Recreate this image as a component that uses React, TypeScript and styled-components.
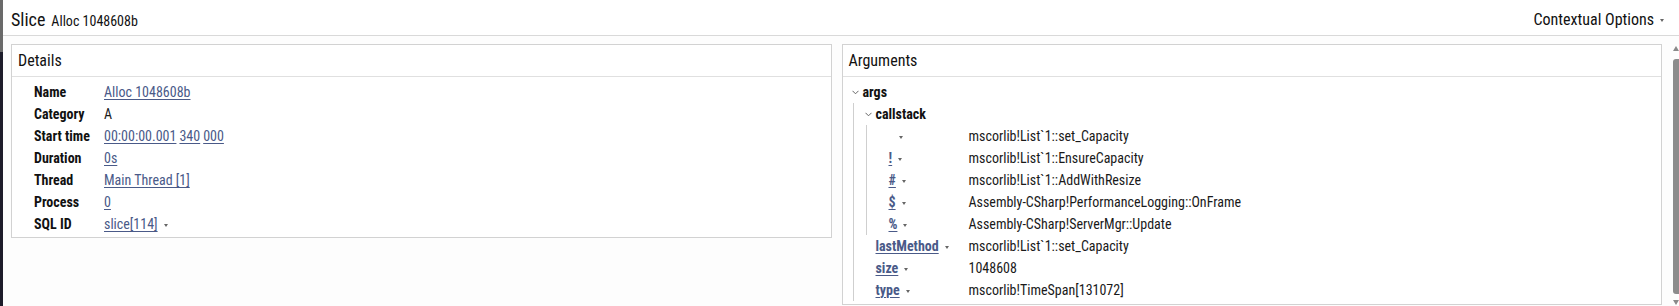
import React, { FunctionComponent } from 'react'
import styled, { createGlobalStyle } from 'styled-components'

const FONT = `"Roboto Condensed", "Roboto", "Liberation Sans", sans-serif`
const LINK = '#4a5a88'

const GlobalStyle = createGlobalStyle`
  html, body {
    margin: 0;
    padding: 0;
    height: 100%;
    background: #fdfdfd;
  }
  #root {
    height: 100%;
  }
  * {
    box-sizing: border-box;
  }
`

const Page = styled.div`
  display: flex;
  height: 100vh;
  font-family: ${FONT};
  font-stretch: 87.5%;
  color: #1a1a1a;
  overflow: hidden;
`

const Rail = styled.div`
  display: flex;
  flex-direction: column;
  width: 3px;
  flex-shrink: 0;
`

const RailTop = styled.div`
  height: 52px;
  background: #6a6a6a;
`

const RailBottom = styled.div`
  flex: 1;
  background: #1d1c2a;
`

const Main = styled.div`
  flex: 1;
  display: flex;
  flex-direction: column;
  min-width: 0;
`

const Header = styled.div`
  display: flex;
  align-items: center;
  justify-content: space-between;
  height: 36px;
  padding: 3px 15px 0 8px;
  background: #fff;
  border-bottom: 1px solid #d9d9d9;
`

const TitleGroup = styled.div`
  display: flex;
  align-items: baseline;
  gap: 6px;
`

const Title = styled.span`
  font-size: 18px;
  color: #111;
`

const Subtitle = styled.span`
  font-size: 14px;
  color: #111;
`

const MenuButton = styled.div`
  display: flex;
  align-items: center;
  font-size: 16px;
  color: #111;
`

const Content = styled.div`
  flex: 1;
  display: flex;
  padding: 8px 0 0 8px;
`

const Panels = styled.div`
  flex: 1;
  display: grid;
  grid-template-columns: 1fr 1fr;
  gap: 10px;
  align-items: start;
`

const Panel = styled.section`
  background: #fff;
  border: 1px solid #d2d2d2;
`

const PanelHeader = styled.div`
  display: flex;
  align-items: center;
  height: 32px;
  padding: 0 6px;
  font-size: 16px;
  color: #111;
  border-bottom: 1px solid #e0e0e0;
`

const DetailsBody = styled.div`
  display: grid;
  grid-template-columns: 70px 1fr;
  grid-auto-rows: 22px;
  align-items: center;
  padding: 4px 0 2px 22px;
  font-size: 14px;
`

const Key = styled.span`
  font-weight: 700;
  color: #111;
`

const Value = styled.span`
  display: flex;
  align-items: center;
  color: #1a1a1a;
`

const Link = styled.span<{ $bold?: boolean }>`
  color: ${LINK};
  text-decoration: underline;
  text-underline-offset: 2px;
  text-decoration-thickness: 1px;
  font-weight: ${p => (p.$bold ? 700 : 400)};
  white-space: pre;
`

const TimePart = styled(Link)`
  margin-right: 3px;
`

const Blank = styled.span`
  display: inline-block;
  width: 4px;
`

const Caret = styled.span`
  display: inline-block;
  width: 0;
  height: 0;
  margin-left: 6px;
  border-left: 2.5px solid transparent;
  border-right: 2.5px solid transparent;
  border-top: 3px solid #666;
  transform: translateY(1px);
`

const TreeBody = styled.div`
  padding: 4px 0 3px 9px;
  font-size: 14px;
`

const Children = styled.div`
  margin-left: 1px;
  padding-left: 11px;
  border-left: 1px solid #cfcfcf;
`

const Row = styled.div`
  display: flex;
  align-items: center;
  height: 22px;
`

const KeyCell = styled.div<{ $width: number }>`
  display: flex;
  align-items: center;
  width: ${p => p.$width}px;
  flex-shrink: 0;
`

const ChevronSlot = styled.span`
  display: flex;
  align-items: center;
  width: 11px;
  flex-shrink: 0;
`

const TreeValue = styled.span`
  color: #1a1a1a;
  white-space: pre;
`

const ScrollTrack = styled.div`
  display: flex;
  flex-direction: column;
  align-items: flex-end;
  width: 17px;
  flex-shrink: 0;
  padding-top: 1px;
`

const ScrollArrow = styled.div<{ $down?: boolean }>`
  width: 0;
  height: 0;
  border-left: 3px solid transparent;
  border-right: 3px solid transparent;
  ${p => (p.$down ? 'border-top: 5px solid #8a8a8a;' : 'border-bottom: 5px solid #8a8a8a;')}
  margin: 1px 0;
`

const ScrollThumb = styled.div`
  width: 6px;
  height: 235px;
  margin: 7px 0 5px;
  background: #8c8c8c;
  border-radius: 3px 0 0 3px;
`

const Chevron: FunctionComponent = () => (
  <svg width="7" height="5" viewBox="0 0 7 5">
    <path d="M0.5 0.8 L3.5 3.8 L6.5 0.8" fill="none" stroke="#666" strokeWidth="1" />
  </svg>
)

type TreeRowProps = {
  depth: number
  label: string
  value?: string
  open?: boolean
  link?: boolean
}

const VALUE_X = 117

const TreeRow: FunctionComponent<TreeRowProps> = ({ depth, label, value, open, link }) => (
  <Row>
    <KeyCell $width={VALUE_X - depth * 13}>
      <ChevronSlot>{open && <Chevron />}</ChevronSlot>
      {!link && <Key>{label}</Key>}
      {link && (label.trim() ? <Link $bold>{label}</Link> : <Blank />)}
      {link && <Caret />}
    </KeyCell>
    {value !== undefined && <TreeValue>{value}</TreeValue>}
  </Row>
)

const callstack = [
  [' ', 'mscorlib!List`1::set_Capacity'],
  ['!', 'mscorlib!List`1::EnsureCapacity'],
  ['#', 'mscorlib!List`1::AddWithResize'],
  ['$', 'Assembly-CSharp!PerformanceLogging::OnFrame'],
  ['%', 'Assembly-CSharp!ServerMgr::Update'],
]

const App: FunctionComponent = () => {
  return (
    <>
      <GlobalStyle />
      <Page>
        <Rail>
          <RailTop />
          <RailBottom />
        </Rail>
        <Main>
          <Header>
            <TitleGroup>
              <Title>Slice</Title>
              <Subtitle>Alloc 1048608b</Subtitle>
            </TitleGroup>
            <MenuButton>
              Contextual Options
              <Caret />
            </MenuButton>
          </Header>
          <Content>
            <Panels>
              <Panel>
                <PanelHeader>Details</PanelHeader>
                <DetailsBody>
                  <Key>Name</Key>
                  <Value><Link>Alloc 1048608b</Link></Value>
                  <Key>Category</Key>
                  <Value>A</Value>
                  <Key>Start time</Key>
                  <Value>
                    <TimePart>00:00:00.001</TimePart>
                    <TimePart>340</TimePart>
                    <TimePart>000</TimePart>
                  </Value>
                  <Key>Duration</Key>
                  <Value><Link>0s</Link></Value>
                  <Key>Thread</Key>
                  <Value><Link>Main Thread [1]</Link></Value>
                  <Key>Process</Key>
                  <Value><Link>0</Link></Value>
                  <Key>SQL ID</Key>
                  <Value>
                    <Link>slice[114]</Link>
                    <Caret />
                  </Value>
                </DetailsBody>
              </Panel>
              <Panel>
                <PanelHeader>Arguments</PanelHeader>
                <TreeBody>
                  <TreeRow depth={0} label="args" open />
                  <Children>
                    <TreeRow depth={1} label="callstack" open />
                    <Children>
                      {callstack.map(([k, v]) => (
                        <TreeRow key={v + k} depth={2} label={k} value={v} link />
                      ))}
                    </Children>
                    <TreeRow depth={1} label="lastMethod" value="mscorlib!List`1::set_Capacity" link />
                    <TreeRow depth={1} label="size" value="1048608" link />
                    <TreeRow depth={1} label="type" value="mscorlib!TimeSpan[131072]" link />
                  </Children>
                </TreeBody>
              </Panel>
            </Panels>
            <ScrollTrack>
              <ScrollArrow />
              <ScrollThumb />
              <ScrollArrow $down />
            </ScrollTrack>
          </Content>
        </Main>
      </Page>
    </>
  )
}

export default App
